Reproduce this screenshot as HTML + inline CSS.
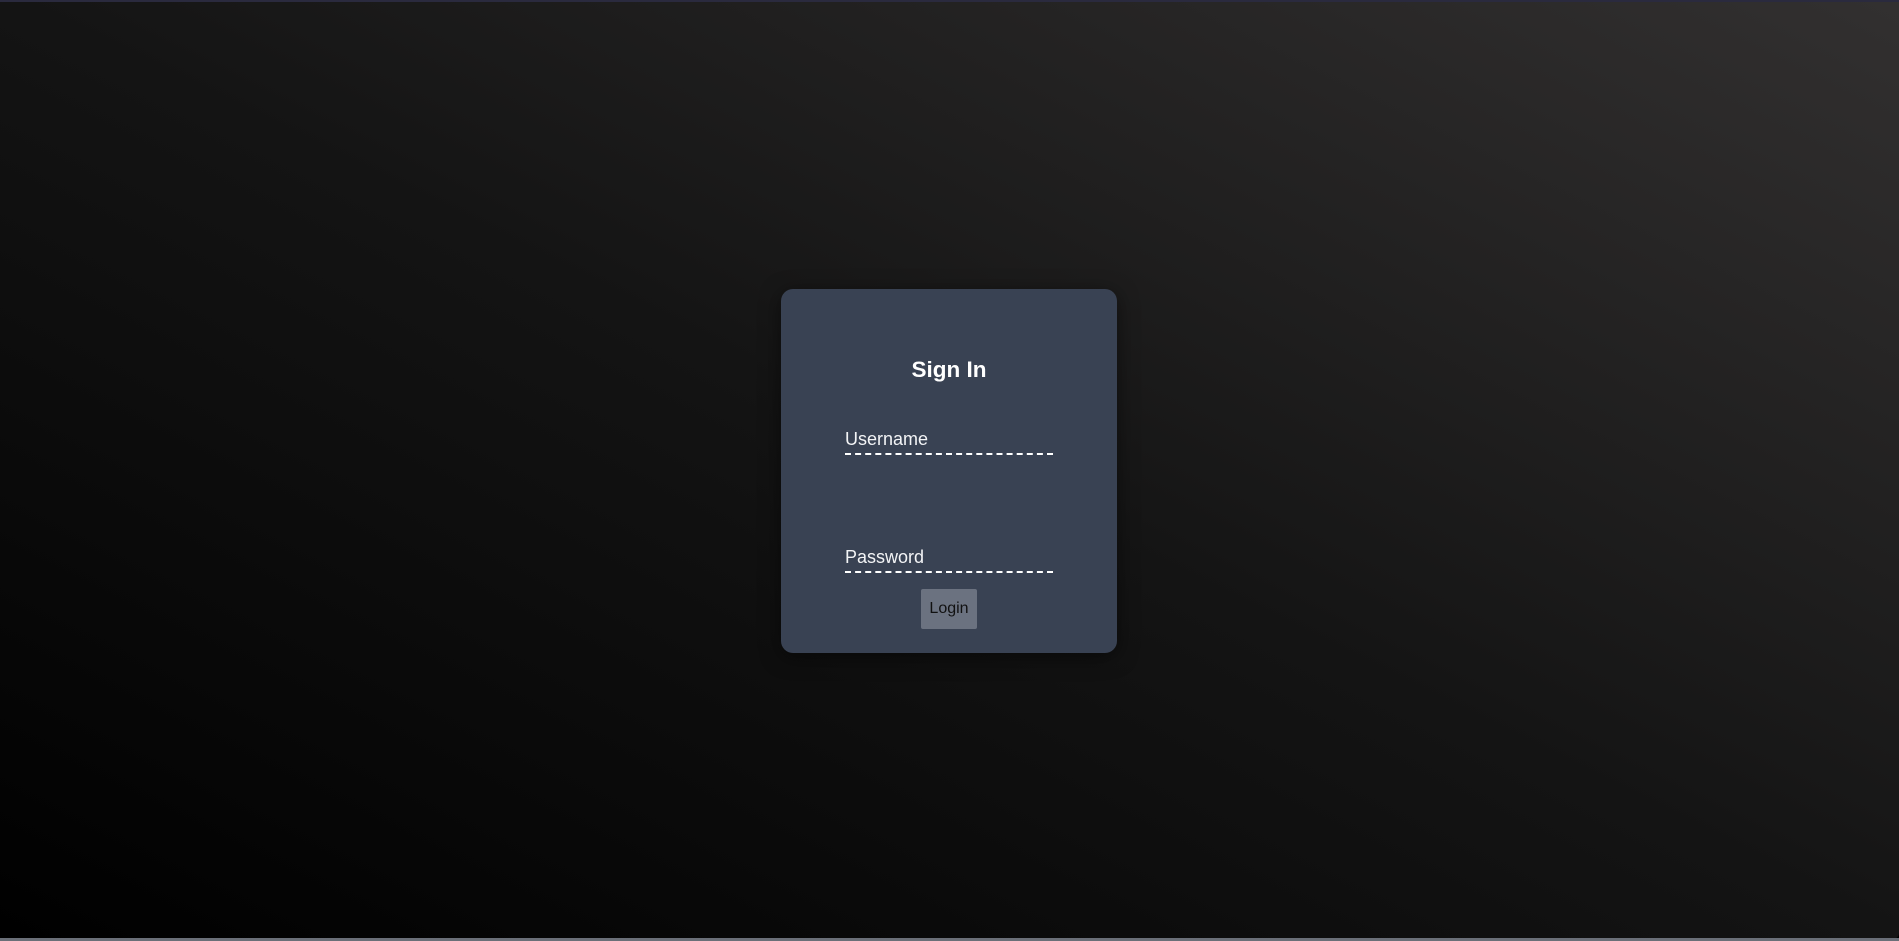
<!DOCTYPE html>
<html><head><meta charset="utf-8"><style>
html,body{margin:0;padding:0;width:1899px;height:941px;overflow:hidden;background:#000;}
body{font-family:"Liberation Sans",Roboto,sans-serif;}
.bg{position:absolute;left:0;top:0;width:1899px;height:939px;background:linear-gradient(to top right,#000 0%,#141414 50%,#323030 100%);border-top:2px solid #2a2a3e;box-sizing:border-box;border-radius:0 0 6px 6px;}
.strip{position:absolute;left:0;top:938px;width:1899px;height:3px;background:#6a6f78;}
.card{position:absolute;left:781px;top:289px;width:336px;height:364px;background:#394253;border-radius:12px;box-shadow:0 4px 20px rgba(0,0,0,.5);}
h1{position:absolute;left:0;width:336px;top:67px;margin:0;text-align:center;color:#fff;font-size:22.5px;font-weight:bold;line-height:28px;}
.f{position:absolute;left:64px;width:208px;height:30px;border-bottom:2px dashed #fff;color:#f3f4f6;font-size:18px;line-height:28px;box-sizing:border-box;}
.btn{position:absolute;left:140px;top:300px;width:56px;height:40px;background:#6b7280;color:#111;font-size:16px;line-height:40px;text-align:center;border-radius:2px;}
</style></head><body>
<div class="bg"></div><div class="strip"></div>
<div class="card">
<h1>Sign In</h1>
<div class="f" style="top:136px">Username</div>
<div class="f" style="top:254px">Password</div>
<div class="btn">Login</div>
</div>
</body></html>
